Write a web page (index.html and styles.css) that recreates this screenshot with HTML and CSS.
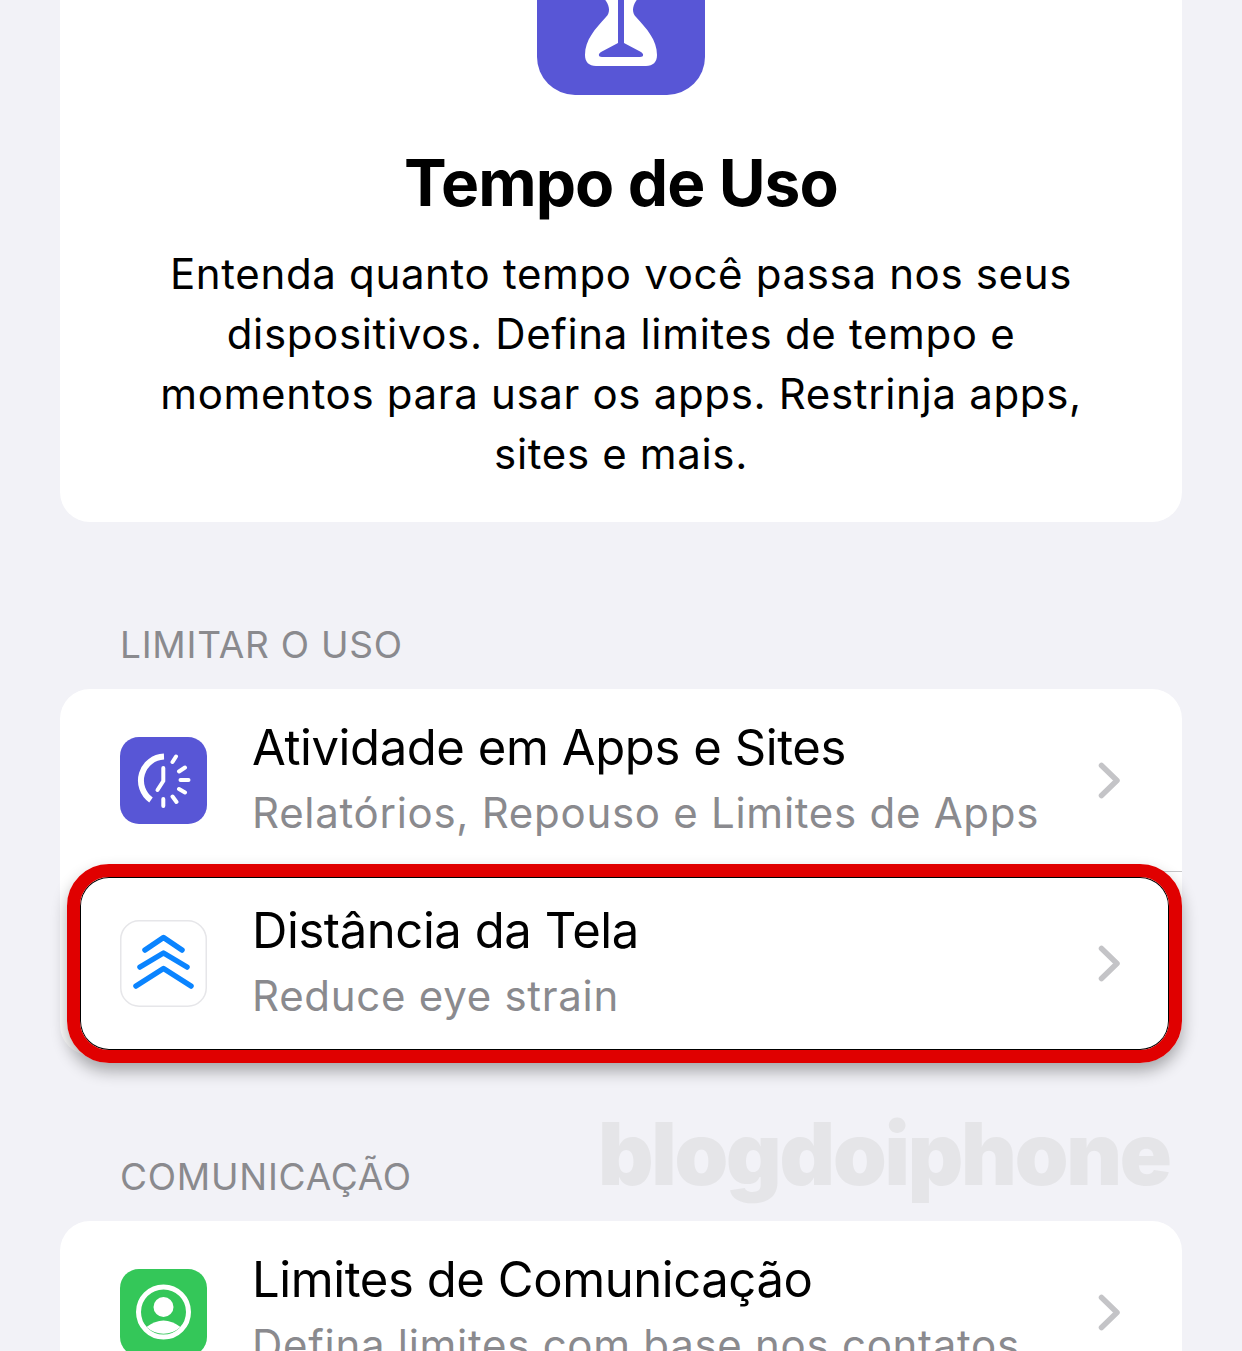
FILE: index.html
```html
<!DOCTYPE html>
<html lang="pt-BR">
<head>
<meta charset="utf-8">
<title>Tempo de Uso</title>
<link rel="stylesheet" href="styles.css">
</head>
<body>
<main class="page">
  <section class="card hero">
    <svg class="hero-icon" viewBox="0 0 168 168" aria-hidden="true">
      <rect width="168" height="168" rx="38" fill="#5856d6"/>
      <path d="M56 20H112C113 44 108 62 99 74C95 80 95 86 99 90C110 102 120 113 120 128C120 135 116 139 109 139H59C52 139 48 135 48 128C48 113 58 102 69 90C73 86 73 80 69 74C60 62 55 44 56 20Z" fill="#fff"/>
      <path d="M81 30H87V116L104 125C107 127 107 130 103 130H65C61 130 61 127 64 125L81 116Z" fill="#5856d6"/>
    </svg>
    <h1 class="hero-title">Tempo de Uso</h1>
    <p class="hero-text">Entenda quanto tempo você passa nos seus<br>dispositivos. Defina limites de tempo e<br>momentos para usar os apps. Restrinja apps,<br>sites e mais.</p>
  </section>

  <h2 class="section-label first">LIMITAR O USO</h2>
  <section class="card group">
    <div class="row">
      <svg class="row-icon" viewBox="0 0 87 87" aria-hidden="true">
        <rect width="87" height="87" rx="19" fill="#5856d6"/>
        <g fill="none" stroke="#fff" stroke-linecap="round">
          <path d="M44 19.500A24 24 0 0 0 31 63" stroke-width="6" stroke-linecap="butt"/>
          <path d="M43.300 31V44L37.500 53" stroke-width="4"/>
          <path d="M43.300 62V69M52.500 59.500L56.500 65M59 52L65 55.500M60.500 43H68.500M59 34.500L65 30.500M52.500 25L56 19.500" stroke-width="4"/>
        </g>
      </svg>
      <div class="row-text">
        <div class="row-title">Atividade em Apps e Sites</div>
        <div class="row-sub">Relatórios, Repouso e Limites de Apps</div>
      </div>
      <svg class="chevron" viewBox="0 0 24 38" aria-hidden="true"><path d="M3.500 3.500L19 18.500L3.500 33.500" fill="none" stroke="#c4c4c7" stroke-width="5.500" stroke-linecap="round" stroke-linejoin="round"/></svg>
    </div>
    <div class="row highlighted">
      <svg class="row-icon bordered" viewBox="0 0 87 87" aria-hidden="true">
        <rect x=".75" y=".75" width="85.5" height="85.5" rx="18.5" fill="#fff" stroke="#e6e6e9" stroke-width="1.5"/>
        <g fill="none" stroke="#0a84ff" stroke-width="5.500" stroke-linecap="round" stroke-linejoin="round">
          <path d="M25 30L43.500 17.500L62 30"/>
          <path d="M20 47L43.500 33L67 47"/>
          <path d="M16 66L43.500 48.500L71 66"/>
        </g>
      </svg>
      <div class="row-text">
        <div class="row-title">Distância da Tela</div>
        <div class="row-sub">Reduce eye strain</div>
      </div>
      <svg class="chevron" viewBox="0 0 24 38" aria-hidden="true"><path d="M3.500 3.500L19 18.500L3.500 33.500" fill="none" stroke="#c4c4c7" stroke-width="5.500" stroke-linecap="round" stroke-linejoin="round"/></svg>
    </div>
  </section>

  <h2 class="section-label second">COMUNICAÇÃO</h2>
  <section class="card group">
    <div class="row">
      <svg class="row-icon" viewBox="0 0 87 87" aria-hidden="true">
        <rect width="87" height="87" rx="19" fill="#34c759"/>
        <circle cx="43.500" cy="43" r="25" fill="none" stroke="#fff" stroke-width="5"/>
        <circle cx="43.500" cy="38" r="10" fill="#fff"/>
        <path d="M26.500 58Q43.500 45 60.500 58A25 25 0 0 1 26.500 58Z" fill="#fff"/>
      </svg>
      <div class="row-text">
        <div class="row-title">Limites de Comunicação</div>
        <div class="row-sub">Defina limites com base nos contatos</div>
      </div>
      <svg class="chevron" viewBox="0 0 24 38" aria-hidden="true"><path d="M3.500 3.500L19 18.500L3.500 33.500" fill="none" stroke="#c4c4c7" stroke-width="5.500" stroke-linecap="round" stroke-linejoin="round"/></svg>
    </div>
  </section>

  <div class="watermark">blogdoiphone</div>
</main>
</body>
</html>
```
FILE: styles.css
```css
* { box-sizing: border-box; }
html, body { margin: 0; height: 100%; }
body {
  background: #f2f2f7;
  overflow: hidden;
  font-family: Inter, "Liberation Sans", sans-serif;
  color: #000;
}
.page {
  position: relative;
  height: 1351px;
  overflow: hidden;
  padding: 0 60px;
}
.card {
  background: #fff;
  border-radius: 30px;
}
.hero {
  height: 522px;
  border-radius: 0 0 30px 30px;
  display: flex;
  flex-direction: column;
  align-items: center;
}
.hero-icon {
  width: 168px;
  height: 168px;
  margin-top: -73px;
  flex: none;
}
.hero-title {
  margin: 46px 0 0;
  font-size: 64px;
  line-height: 84px;
  font-weight: 700;
  letter-spacing: -0.9px;
}
.hero-text {
  margin: 19px 0 0;
  font-size: 42px;
  line-height: 60px;
  text-align: center;
  letter-spacing: 0.66px;
}
.section-label {
  margin: 0;
  padding-left: 60px;
  font-size: 37px;
  line-height: 46px;
  font-weight: 400;
  color: #8a8a8e;
  letter-spacing: 0.75px;
}
.section-label.first { margin-top: 100px; margin-bottom: 21px; }
.section-label.second { margin-top: 99px; margin-bottom: 21px; }
.row {
  position: relative;
  height: 183px;
  display: flex;
  align-items: center;
  padding-left: 60px;
  padding-right: 60px;
}
.row + .row::before {
  content: "";
  position: absolute;
  top: -1px;
  left: 194px;
  right: 0;
  height: 1px;
  background: #c6c6c8;
}
.row-icon {
  width: 87px;
  height: 87px;
  flex: none;
}
.row-text {
  flex: 1;
  margin-left: 45px;
  margin-bottom: 2px;
  min-width: 0;
}
.row-title {
  font-size: 49px;
  line-height: 66px;
  letter-spacing: -0.42px;
  white-space: nowrap;
}
.row-sub {
  font-size: 42px;
  line-height: 64px;
  color: #8a8a8e;
  letter-spacing: 0.72px;
  white-space: nowrap;
}
.chevron {
  width: 24px;
  height: 38px;
  flex: none;
}
.highlighted::after {
  content: "";
  position: absolute;
  top: -8px;
  bottom: -8px;
  left: 7px;
  right: 0;
  border: 13px solid #e00000;
  border-radius: 42px;
  box-shadow: 0 8px 16px rgba(0, 0, 0, .32), inset 0 0 0 1px #000;
  pointer-events: none;
}
.watermark {
  position: absolute;
  left: 598px;
  top: 1099px;
  font-size: 86px;
  line-height: 110px;
  font-weight: 900;
  letter-spacing: -2.2px;
  color: #e5e5e8;
  white-space: nowrap;
}
```
